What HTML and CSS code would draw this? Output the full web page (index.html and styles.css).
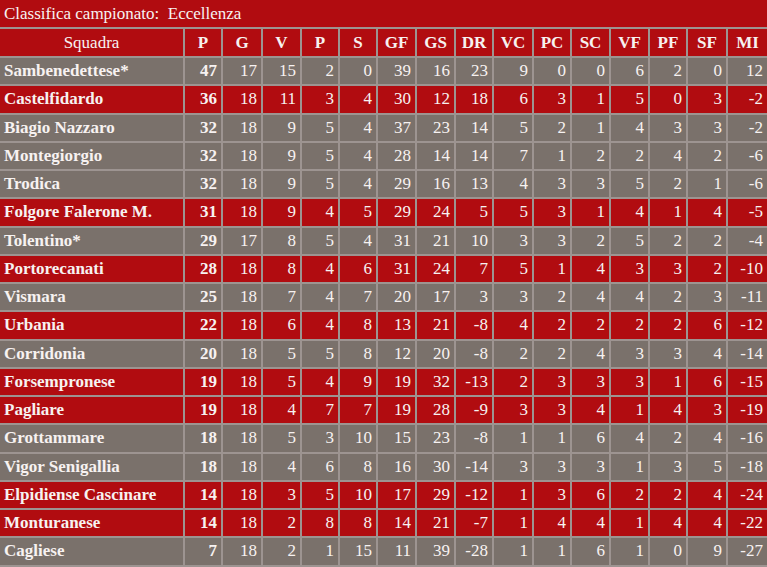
FILE: index.html
```html
<!DOCTYPE html>
<html lang="it">
<head>
<meta charset="utf-8">
<title>Classifica campionato: Eccellenza</title>
<link rel="stylesheet" href="styles.css">
</head>
<body>
<div class="table">
  <div class="title">Classifica campionato:&nbsp; Eccellenza</div>
  <div class="row head">
    <div class="c squadra">Squadra</div><div class="c">P</div><div class="c">G</div><div class="c">V</div><div class="c">P</div><div class="c">S</div><div class="c">GF</div><div class="c">GS</div><div class="c">DR</div><div class="c">VC</div><div class="c">PC</div><div class="c">SC</div><div class="c">VF</div><div class="c">PF</div><div class="c">SF</div><div class="c">MI</div>
  </div>
  <div class="row gray"><div class="c name">Sambenedettese*</div><div class="c num b">47</div><div class="c num">17</div><div class="c num">15</div><div class="c num">2</div><div class="c num">0</div><div class="c num">39</div><div class="c num">16</div><div class="c num">23</div><div class="c num">9</div><div class="c num">0</div><div class="c num">0</div><div class="c num">6</div><div class="c num">2</div><div class="c num">0</div><div class="c num">12</div></div>
  <div class="row red"><div class="c name">Castelfidardo</div><div class="c num b">36</div><div class="c num">18</div><div class="c num">11</div><div class="c num">3</div><div class="c num">4</div><div class="c num">30</div><div class="c num">12</div><div class="c num">18</div><div class="c num">6</div><div class="c num">3</div><div class="c num">1</div><div class="c num">5</div><div class="c num">0</div><div class="c num">3</div><div class="c num">-2</div></div>
  <div class="row gray"><div class="c name">Biagio Nazzaro</div><div class="c num b">32</div><div class="c num">18</div><div class="c num">9</div><div class="c num">5</div><div class="c num">4</div><div class="c num">37</div><div class="c num">23</div><div class="c num">14</div><div class="c num">5</div><div class="c num">2</div><div class="c num">1</div><div class="c num">4</div><div class="c num">3</div><div class="c num">3</div><div class="c num">-2</div></div>
  <div class="row gray"><div class="c name">Montegiorgio</div><div class="c num b">32</div><div class="c num">18</div><div class="c num">9</div><div class="c num">5</div><div class="c num">4</div><div class="c num">28</div><div class="c num">14</div><div class="c num">14</div><div class="c num">7</div><div class="c num">1</div><div class="c num">2</div><div class="c num">2</div><div class="c num">4</div><div class="c num">2</div><div class="c num">-6</div></div>
  <div class="row gray"><div class="c name">Trodica</div><div class="c num b">32</div><div class="c num">18</div><div class="c num">9</div><div class="c num">5</div><div class="c num">4</div><div class="c num">29</div><div class="c num">16</div><div class="c num">13</div><div class="c num">4</div><div class="c num">3</div><div class="c num">3</div><div class="c num">5</div><div class="c num">2</div><div class="c num">1</div><div class="c num">-6</div></div>
  <div class="row red"><div class="c name">Folgore Falerone M.</div><div class="c num b">31</div><div class="c num">18</div><div class="c num">9</div><div class="c num">4</div><div class="c num">5</div><div class="c num">29</div><div class="c num">24</div><div class="c num">5</div><div class="c num">5</div><div class="c num">3</div><div class="c num">1</div><div class="c num">4</div><div class="c num">1</div><div class="c num">4</div><div class="c num">-5</div></div>
  <div class="row gray"><div class="c name">Tolentino*</div><div class="c num b">29</div><div class="c num">17</div><div class="c num">8</div><div class="c num">5</div><div class="c num">4</div><div class="c num">31</div><div class="c num">21</div><div class="c num">10</div><div class="c num">3</div><div class="c num">3</div><div class="c num">2</div><div class="c num">5</div><div class="c num">2</div><div class="c num">2</div><div class="c num">-4</div></div>
  <div class="row red"><div class="c name">Portorecanati</div><div class="c num b">28</div><div class="c num">18</div><div class="c num">8</div><div class="c num">4</div><div class="c num">6</div><div class="c num">31</div><div class="c num">24</div><div class="c num">7</div><div class="c num">5</div><div class="c num">1</div><div class="c num">4</div><div class="c num">3</div><div class="c num">3</div><div class="c num">2</div><div class="c num">-10</div></div>
  <div class="row gray"><div class="c name">Vismara</div><div class="c num b">25</div><div class="c num">18</div><div class="c num">7</div><div class="c num">4</div><div class="c num">7</div><div class="c num">20</div><div class="c num">17</div><div class="c num">3</div><div class="c num">3</div><div class="c num">2</div><div class="c num">4</div><div class="c num">4</div><div class="c num">2</div><div class="c num">3</div><div class="c num">-11</div></div>
  <div class="row red"><div class="c name">Urbania</div><div class="c num b">22</div><div class="c num">18</div><div class="c num">6</div><div class="c num">4</div><div class="c num">8</div><div class="c num">13</div><div class="c num">21</div><div class="c num">-8</div><div class="c num">4</div><div class="c num">2</div><div class="c num">2</div><div class="c num">2</div><div class="c num">2</div><div class="c num">6</div><div class="c num">-12</div></div>
  <div class="row gray"><div class="c name">Corridonia</div><div class="c num b">20</div><div class="c num">18</div><div class="c num">5</div><div class="c num">5</div><div class="c num">8</div><div class="c num">12</div><div class="c num">20</div><div class="c num">-8</div><div class="c num">2</div><div class="c num">2</div><div class="c num">4</div><div class="c num">3</div><div class="c num">3</div><div class="c num">4</div><div class="c num">-14</div></div>
  <div class="row red"><div class="c name">Forsempronese</div><div class="c num b">19</div><div class="c num">18</div><div class="c num">5</div><div class="c num">4</div><div class="c num">9</div><div class="c num">19</div><div class="c num">32</div><div class="c num">-13</div><div class="c num">2</div><div class="c num">3</div><div class="c num">3</div><div class="c num">3</div><div class="c num">1</div><div class="c num">6</div><div class="c num">-15</div></div>
  <div class="row red"><div class="c name">Pagliare</div><div class="c num b">19</div><div class="c num">18</div><div class="c num">4</div><div class="c num">7</div><div class="c num">7</div><div class="c num">19</div><div class="c num">28</div><div class="c num">-9</div><div class="c num">3</div><div class="c num">3</div><div class="c num">4</div><div class="c num">1</div><div class="c num">4</div><div class="c num">3</div><div class="c num">-19</div></div>
  <div class="row gray"><div class="c name">Grottammare</div><div class="c num b">18</div><div class="c num">18</div><div class="c num">5</div><div class="c num">3</div><div class="c num">10</div><div class="c num">15</div><div class="c num">23</div><div class="c num">-8</div><div class="c num">1</div><div class="c num">1</div><div class="c num">6</div><div class="c num">4</div><div class="c num">2</div><div class="c num">4</div><div class="c num">-16</div></div>
  <div class="row gray"><div class="c name">Vigor Senigallia</div><div class="c num b">18</div><div class="c num">18</div><div class="c num">4</div><div class="c num">6</div><div class="c num">8</div><div class="c num">16</div><div class="c num">30</div><div class="c num">-14</div><div class="c num">3</div><div class="c num">3</div><div class="c num">3</div><div class="c num">1</div><div class="c num">3</div><div class="c num">5</div><div class="c num">-18</div></div>
  <div class="row red"><div class="c name">Elpidiense Cascinare</div><div class="c num b">14</div><div class="c num">18</div><div class="c num">3</div><div class="c num">5</div><div class="c num">10</div><div class="c num">17</div><div class="c num">29</div><div class="c num">-12</div><div class="c num">1</div><div class="c num">3</div><div class="c num">6</div><div class="c num">2</div><div class="c num">2</div><div class="c num">4</div><div class="c num">-24</div></div>
  <div class="row red"><div class="c name">Monturanese</div><div class="c num b">14</div><div class="c num">18</div><div class="c num">2</div><div class="c num">8</div><div class="c num">8</div><div class="c num">14</div><div class="c num">21</div><div class="c num">-7</div><div class="c num">1</div><div class="c num">4</div><div class="c num">4</div><div class="c num">1</div><div class="c num">4</div><div class="c num">4</div><div class="c num">-22</div></div>
  <div class="row gray"><div class="c name">Cagliese</div><div class="c num b">7</div><div class="c num">18</div><div class="c num">2</div><div class="c num">1</div><div class="c num">15</div><div class="c num">11</div><div class="c num">39</div><div class="c num">-28</div><div class="c num">1</div><div class="c num">1</div><div class="c num">6</div><div class="c num">1</div><div class="c num">0</div><div class="c num">9</div><div class="c num">-27</div></div>
</div>
</body>
</html>
```
FILE: styles.css
```css
html, body {
  margin: 0;
  padding: 0;
  background: #9d9491;
}
body {
  width: 767px;
  height: 567px;
  overflow: hidden;
  font-family: "Liberation Serif", "Times New Roman", serif;
  font-size: 17px;
  color: #f7f2f1;
}
.table {
  display: grid;
  row-gap: 2px;
  background: #9d9491;
  width: 767px;
}
.title {
  height: 27px;
  background: #b10c10;
  padding-left: 4px;
  display: flex;
  align-items: center;
}
.row {
  display: grid;
  grid-template-columns: 183px 36px 38px 37px 36px 36px 37px 37px 36px 38px 36px 37px 37px 36px 38px 39px;
  column-gap: 2px;
  height: 26.25px;
}
.row.head {
  height: 27px;
}
.c {
  display: flex;
  align-items: center;
  white-space: nowrap;
  overflow: hidden;
}
.head .c {
  background: #b10c10;
  justify-content: center;
  font-weight: bold;
}
.head .c.squadra {
  font-weight: normal;
}
.red .c {
  background: #b10c10;
}
.gray .c {
  background: #7a716b;
}
.name {
  font-weight: bold;
  padding-left: 4px;
}
.num {
  justify-content: flex-end;
  padding-right: 4px;
}
.b {
  font-weight: bold;
}
```
